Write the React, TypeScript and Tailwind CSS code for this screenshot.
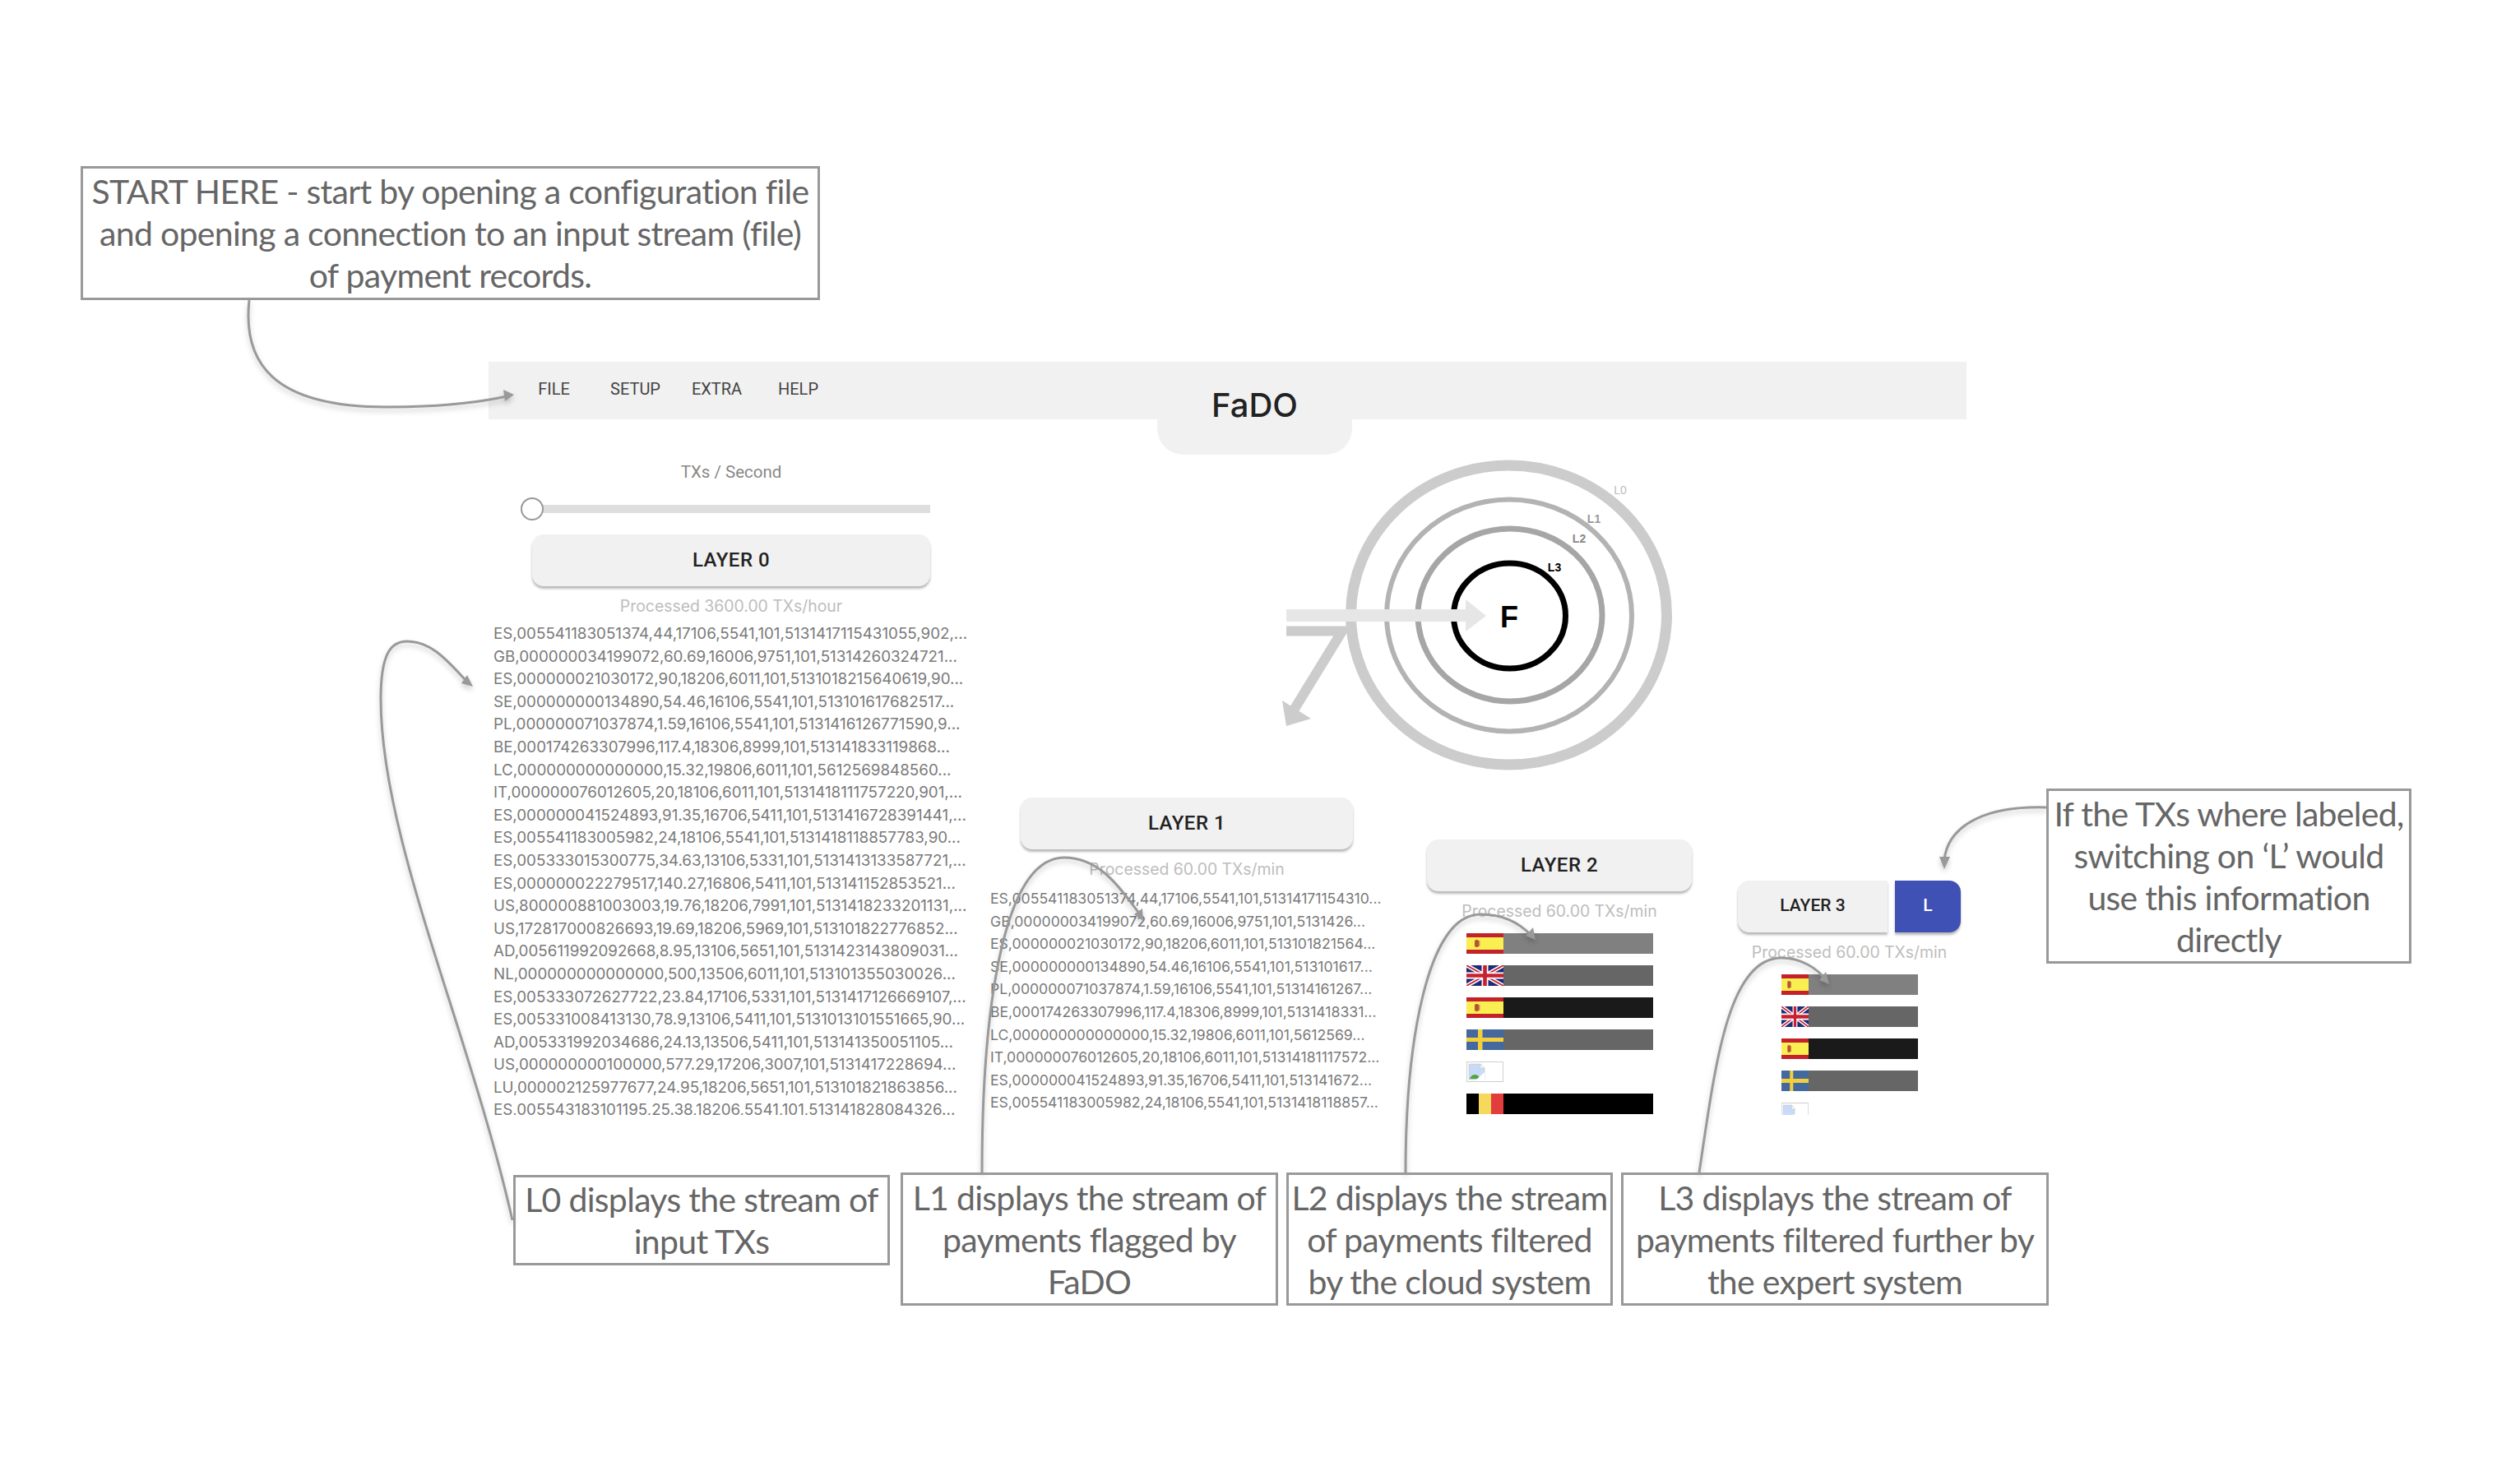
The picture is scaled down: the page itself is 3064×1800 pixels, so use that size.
const layer0Lines = [
  "ES,005541183051374,44,17106,5541,101,5131417115431055,902,...",
  "GB,000000034199072,60.69,16006,9751,101,51314260324721...",
  "ES,000000021030172,90,18206,6011,101,5131018215640619,90...",
  "SE,000000000134890,54.46,16106,5541,101,513101617682517...",
  "PL,000000071037874,1.59,16106,5541,101,5131416126771590,9...",
  "BE,000174263307996,117.4,18306,8999,101,513141833119868...",
  "LC,000000000000000,15.32,19806,6011,101,5612569848560...",
  "IT,000000076012605,20,18106,6011,101,5131418111757220,901,...",
  "ES,000000041524893,91.35,16706,5411,101,5131416728391441,...",
  "ES,005541183005982,24,18106,5541,101,5131418118857783,90...",
  "ES,005333015300775,34.63,13106,5331,101,5131413133587721,...",
  "ES,000000022279517,140.27,16806,5411,101,513141152853521...",
  "US,800000881003003,19.76,18206,7991,101,5131418233201131,...",
  "US,172817000826693,19.69,18206,5969,101,513101822776852...",
  "AD,005611992092668,8.95,13106,5651,101,5131423143809031...",
  "NL,000000000000000,500,13506,6011,101,513101355030026...",
  "ES,005333072627722,23.84,17106,5331,101,5131417126669107,...",
  "ES,005331008413130,78.9,13106,5411,101,5131013101551665,90...",
  "AD,005331992034686,24.13,13506,5411,101,513141350051105...",
  "US,000000000100000,577.29,17206,3007,101,5131417228694...",
  "LU,000002125977677,24.95,18206,5651,101,513101821863856...",
  "ES,005543183101195,25.38,18206,5541,101,513141828084326...",
];

const layer1Lines = [
  "ES,005541183051374,44,17106,5541,101,51314171154310...",
  "GB,000000034199072,60.69,16006,9751,101,5131426...",
  "ES,000000021030172,90,18206,6011,101,513101821564...",
  "SE,000000000134890,54.46,16106,5541,101,513101617...",
  "PL,000000071037874,1.59,16106,5541,101,51314161267...",
  "BE,000174263307996,117.4,18306,8999,101,5131418331...",
  "LC,000000000000000,15.32,19806,6011,101,5612569...",
  "IT,000000076012605,20,18106,6011,101,51314181117572...",
  "ES,000000041524893,91.35,16706,5411,101,513141672...",
  "ES,005541183005982,24,18106,5541,101,5131418118857...",
];

type FlagCode = "es" | "gb" | "se" | "be" | "none";

const rows2: { flag: FlagCode; color: string }[] = [
  { flag: "es", color: "bg-[#808080]" },
  { flag: "gb", color: "bg-[#666666]" },
  { flag: "es", color: "bg-[#1a1a1a]" },
  { flag: "se", color: "bg-[#666666]" },
  { flag: "none", color: "bg-white" },
  { flag: "be", color: "bg-black" },
];

function Flag({ code }: { code: FlagCode }) {
  return (
    <svg viewBox="0 0 45 25" preserveAspectRatio="none" className="block h-full w-full">
      {code === "es" && (
        <g>
          <rect width="45" height="25" fill="#c4222a" />
          <rect y="5" width="45" height="15" fill="#f9ef50" />
          <rect x="10" y="8" width="5" height="9" rx="2" fill="#b9503c" />
          <rect x="15" y="9" width="1.5" height="7" fill="#c99a3c" />
        </g>
      )}
      {code === "gb" && (
        <g>
          <rect width="45" height="25" fill="#1d2a78" />
          <path d="M0 0L45 25M45 0L0 25" stroke="#fff" strokeWidth="5" />
          <path d="M0 0L45 25M45 0L0 25" stroke="#c8202f" strokeWidth="1.8" />
          <path d="M22.5 0V25M0 12.5H45" stroke="#fff" strokeWidth="8" />
          <path d="M22.5 0V25M0 12.5H45" stroke="#c8202f" strokeWidth="4.6" />
        </g>
      )}
      {code === "se" && (
        <g>
          <rect width="45" height="25" fill="#43699f" />
          <rect x="14" width="5.5" height="25" fill="#f3cf3b" />
          <rect y="10" width="45" height="5" fill="#f3cf3b" />
        </g>
      )}
      {code === "be" && (
        <g>
          <rect width="15" height="25" fill="#000" />
          <rect x="15" width="15" height="25" fill="#f6d95c" />
          <rect x="30" width="15" height="25" fill="#e23c3c" />
        </g>
      )}
      {code === "none" && (
        <g>
          <rect x="0.5" y="0.5" width="44" height="24" fill="#fff" stroke="#cfcfcf" />
          <path d="M3 3H17L22 8V22H3Z" fill="#c9daf8" stroke="#b8b8b8" strokeWidth="0.5" />
          <path d="M17 3L22 8H17Z" fill="#fff" stroke="#b8b8b8" strokeWidth="0.5" />
          <path d="M4 21C6 16 10 15 14 17L17 21Z" fill="#4ea83e" />
          <path d="M11 23L22 13V23Z" fill="#fff" />
        </g>
      )}
    </svg>
  );
}

function FlagRows({ flagWidth, barWidth }: { flagWidth: string; barWidth: string }) {
  return (
    <div className="flex flex-col gap-[14px]">
      {rows2.map((row, i) => (
        <div key={i} className={`flex h-[25px] shrink-0 ${barWidth}`}>
          <div className={`h-full shrink-0 ${flagWidth}`}>
            <Flag code={row.flag} />
          </div>
          <div className={`h-full flex-1 ${row.color}`} />
        </div>
      ))}
    </div>
  );
}

function LayerButton({ label, className }: { label: string; className: string }) {
  return (
    <button
      className={`h-[63px] bg-[#f1f1f1] pb-[2px] font-['Roboto',sans-serif] font-medium text-[#222222] shadow-[0_3px_3px_rgba(0,0,0,0.28)] ${className}`}
    >
      {label}
    </button>
  );
}

function Processed({ children }: { children: string }) {
  return (
    <p className="mt-[10px] text-center font-['Inter',sans-serif] text-[19.4px] leading-[28px] text-[#bdbdbd]">
      {children}
    </p>
  );
}

function TxList({ lines, className }: { lines: string[]; className: string }) {
  return (
    <div className={`overflow-hidden whitespace-nowrap font-['Inter',sans-serif] leading-[27.6px] text-[#7a7a7a] ${className}`}>
      {lines.map((line, i) => (
        <div key={i}>{line}</div>
      ))}
    </div>
  );
}

function Diagram() {
  return (
    <svg viewBox="1555 555 485 385" className="ml-[365px] mt-[45px] block h-[385px] w-[485px]">
      <ellipse cx="1834.5" cy="748" rx="192" ry="182" fill="none" stroke="#cccccc" strokeWidth="13" />
      <ellipse cx="1835" cy="748.5" rx="149" ry="141" fill="none" stroke="#b3b3b3" strokeWidth="6" />
      <ellipse cx="1836" cy="748" rx="112" ry="105" fill="none" stroke="#a6a6a6" strokeWidth="7" />
      <ellipse cx="1835.5" cy="749" rx="68" ry="64" fill="none" stroke="#000000" strokeWidth="7" />
      <path d="M1564 741H1782V729L1807 749L1782 768V756H1564Z" fill="#e6e6e6" />
      <path d="M1564 767.5H1632L1574 862" fill="none" stroke="#cccccc" strokeWidth="12" />
      <path d="M1559 852L1564 883L1594 874Z" fill="#cccccc" />
      <g fontFamily="'Liberation Sans', sans-serif">
        <text x="1970" y="601" textAnchor="middle" fontSize="14" fill="#bbbbbb">L0</text>
        <text x="1938" y="636" textAnchor="middle" fontSize="14" fill="#999999" fontWeight="bold">L1</text>
        <text x="1920" y="660" textAnchor="middle" fontSize="14" fill="#888888" fontWeight="bold">L2</text>
        <text x="1890" y="695" textAnchor="middle" fontSize="14" fill="#000000" fontWeight="bold">L3</text>
        <text x="1835" y="763" textAnchor="middle" fontSize="36" fill="#000000" fontWeight="bold">F</text>
      </g>
    </svg>
  );
}

function Callout({ className, lines }: { className: string; lines: string[] }) {
  return (
    <div
      className={`absolute flex flex-col items-center justify-center whitespace-nowrap border-[3px] border-[#999999] text-center font-['Lato',sans-serif] text-[41px] leading-[51px] tracking-[-0.7px] text-[#666666] ${className}`}
    >
      {lines.map((line) => (
        <span key={line}>{line}</span>
      ))}
    </div>
  );
}

function Arrows() {
  return (
    <svg
      viewBox="0 0 3064 1800"
      className="pointer-events-none absolute left-0 top-0 h-[1800px] w-[3064px] drop-shadow-[0_4px_3px_rgba(0,0,0,0.2)]"
    >
      <g fill="none" stroke="#999999" strokeWidth="3">
        <path d="M303 365C295 440 330 495 470 495C530 495 580 490 616 482" />
        <path d="M623 1484C570 1250 463 1020 463 850C463 795 475 780 495 780C525 780 545 805 566 827" />
        <path d="M1194 1426C1194 1250 1215 1043 1294 1043C1340 1043 1365 1085 1386 1112" />
        <path d="M1709 1426C1709 1270 1735 1112 1800 1112C1830 1112 1850 1125 1862 1138" />
        <path d="M2066 1426C2085 1300 2100 1165 2166 1165C2190 1165 2210 1178 2220 1192" />
        <path d="M2488 982C2420 980 2370 1000 2364 1045" />
      </g>
      <g fill="#999999">
        <path d="M625 480L612 474L614 488Z" />
        <path d="M575 835L561 831L568 821Z" />
        <path d="M1390 1120L1379 1112L1389 1105Z" />
        <path d="M1867 1143L1855 1138L1864 1128Z" />
        <path d="M2224 1197L2212 1192L2220 1182Z" />
        <path d="M2364 1057L2358 1042L2371 1042Z" />
      </g>
    </svg>
  );
}

export default function App() {
  return (
    <div className="relative h-[1800px] w-[3064px] overflow-hidden bg-white pl-[594px] pt-[440px]">
      <div className="w-[1797px]">
        <header className="relative flex h-[70px] items-center bg-[#f1f1f1] pb-[4px] pl-[30px]">
          {["FILE", "SETUP", "EXTRA", "HELP"].map((item) => (
            <button
              key={item}
              className="w-[99px] text-center font-['Roboto',sans-serif] text-[20px] text-[#444444]"
            >
              {item}
            </button>
          ))}
          <div className="absolute left-[813px] top-0 flex h-[113px] w-[237px] items-start justify-center rounded-b-[32px] bg-[#f1f1f1] pt-[28px] font-['Inter',sans-serif] text-[40px] font-medium leading-[50px] text-[#222222]">
            FaDO
          </div>
        </header>

        <main className="flex items-start">
          <section className="w-[596px] shrink-0 pt-[50px]">
            <div className="ml-[53px] flex w-[484px] flex-col">
              <p className="text-center font-['Roboto',sans-serif] text-[20.5px] leading-[28px] text-[#888888]">
                TXs / Second
              </p>
              <div className="relative mt-[17px] flex h-[28px] items-center">
                <div className="h-[10px] w-full bg-[#dedede]" />
                <div className="absolute -left-[14px] top-0 h-[28px] w-[28px] rounded-full border-2 border-[#999999] bg-white" />
              </div>
              <LayerButton label="LAYER 0" className="mt-[17px] w-full rounded-[14px] text-[24px] tracking-[0.5px]" />
              <Processed>Processed 3600.00 TXs/hour</Processed>
            </div>
            <TxList lines={layer0Lines} className="ml-[6px] mt-[6px] h-[599px] text-[18.8px]" />
          </section>

          <section className="flex-1">
            <Diagram />
            <div className="flex items-start">
              <div className="ml-[10px] mt-[30px] flex w-[486px] flex-col">
                <LayerButton label="LAYER 1" className="mx-auto w-[404px] rounded-[14px] text-[24px] tracking-[0.5px]" />
                <Processed>Processed 60.00 TXs/min</Processed>
                <TxList lines={layer1Lines} className="ml-[4px] mt-[8px] h-[277px] text-[17.6px]" />
              </div>

              <div className="ml-[49px] mt-[81px] flex w-[322px] flex-col">
                <LayerButton label="LAYER 2" className="w-full rounded-[14px] text-[24px] tracking-[0.5px]" />
                <Processed>Processed 60.00 TXs/min</Processed>
                <div className="ml-[48px] mt-[13px] h-[221px] overflow-hidden">
                  <FlagRows flagWidth="w-[45px]" barWidth="w-[227px]" />
                </div>
              </div>

              <div className="ml-[56px] mt-[131px] flex w-[271px] flex-col">
                <div className="flex gap-[9px]">
                  <LayerButton label="LAYER 3" className="w-[182px] rounded-l-[14px] text-[21px]" />
                  <button className="h-[63px] w-[80px] rounded-r-[14px] bg-[#3f51b5] pb-[2px] font-['Roboto',sans-serif] text-[21px] font-medium text-white shadow-[0_3px_3px_rgba(0,0,0,0.28)]">
                    L
                  </button>
                </div>
                <Processed>Processed 60.00 TXs/min</Processed>
                <div className="ml-[53px] mt-[13px] h-[171px] overflow-hidden">
                  <FlagRows flagWidth="w-[33px]" barWidth="w-[166px]" />
                </div>
              </div>
            </div>
          </section>
        </main>
      </div>

      <Arrows />

      <Callout
        className="left-[98px] top-[202px] h-[163px] w-[899px]"
        lines={[
          "START HERE - start by opening a configuration file",
          "and opening a connection to an input stream (file)",
          "of payment records.",
        ]}
      />
      <Callout className="left-[624px] top-[1429px] h-[110px] w-[458px]" lines={["L0 displays the stream of", "input TXs"]} />
      <Callout
        className="left-[1095px] top-[1426px] h-[162px] w-[459px]"
        lines={["L1 displays the stream of", "payments flagged by", "FaDO"]}
      />
      <Callout
        className="left-[1564px] top-[1426px] h-[162px] w-[397px]"
        lines={["L2 displays the stream", "of payments filtered", "by the cloud system"]}
      />
      <Callout
        className="left-[1971px] top-[1426px] h-[162px] w-[520px]"
        lines={["L3 displays the stream of", "payments filtered further by", "the expert system"]}
      />
      <Callout
        className="left-[2488px] top-[959px] h-[213px] w-[444px]"
        lines={["If the TXs where labeled,", "switching on ‘L’ would", "use this information", "directly"]}
      />
    </div>
  );
}
